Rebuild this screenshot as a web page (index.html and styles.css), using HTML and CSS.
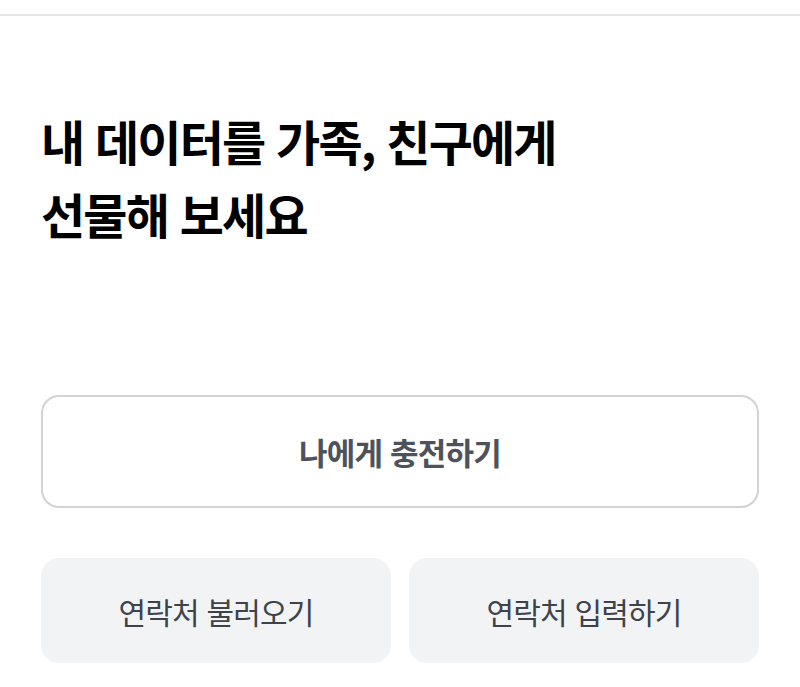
FILE: index.html
```html
<!DOCTYPE html>
<html lang="ko">
<head>
<meta charset="utf-8">
<link rel="stylesheet" href="styles.css">
</head>
<body>
<div class="topbar"></div>
<main class="content">
  <h1 class="title">내 데이터를 가족, 친구에게<br>선물해 보세요</h1>
  <div class="actions">
    <button class="btn btn-outline">나에게 충전하기</button>
    <div class="row">
      <button class="btn btn-soft">연락처 불러오기</button>
      <button class="btn btn-soft">연락처 입력하기</button>
    </div>
  </div>
</main>
</body>
</html>
```
FILE: styles.css
```css
* { box-sizing: border-box; }
html, body { margin: 0; padding: 0; background: #fff; }
body {
  font-family: "Noto Sans CJK KR", "Noto Sans", sans-serif;
  width: 800px;
  height: 687px;
  overflow: hidden;
}
.topbar {
  height: 16px;
  border-bottom: 2px solid #e6e6e6;
}
.content {
  padding: 0 41px;
}
.title {
  margin: 0;
  padding-top: 88px;
  font-size: 48px;
  line-height: 73px;
  font-weight: 700;
  letter-spacing: -1.8px;
  color: #000;
}
.actions {
  margin-top: 145px;
  display: flex;
  flex-direction: column;
  gap: 50px;
}
.btn {
  font-family: inherit;
  border-radius: 18px;
  display: flex;
  align-items: center;
  justify-content: center;
  cursor: pointer;
}
.btn-outline {
  height: 113px;
  background: #fff;
  border: 2px solid #d2d3d5;
  font-size: 31px;
  font-weight: 700;
  letter-spacing: -0.8px;
  color: #4d535c;
}
.row {
  display: grid;
  grid-template-columns: 1fr 1fr;
  gap: 18px;
}
.btn-soft {
  height: 105px;
  background: #f2f3f5;
  border: none;
  font-size: 30px;
  font-weight: 400;
  letter-spacing: -0.8px;
  color: #3e4249;
}
```
